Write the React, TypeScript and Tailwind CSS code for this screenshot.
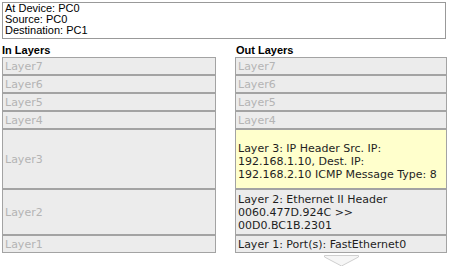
import React from "react";

const dv = { fontFamily: '"DejaVu Sans", Verdana, sans-serif' };
const ar = { fontFamily: '"Liberation Sans", Arial, sans-serif' };

function Row({ h, children, muted, yellow }: { h: string; children: React.ReactNode; muted?: boolean; yellow?: boolean }) {
  return (
    <div
      className={`${h} flex items-center border border-[#a3a3a3] pl-[2px] text-[11px] leading-[13px] ${
        yellow ? "bg-[#ffffcc] pt-[4px]" : "bg-[#ececec]"
      } ${muted ? "text-[#b4b4b4]" : "text-[#1e1e1e]"}`}
      style={dv}
    >
      <div>{children}</div>
    </div>
  );
}

export default function App() {
  return (
    <div className="w-[450px] h-[266px] bg-white overflow-hidden relative">
      <div
        className="ml-[2px] mt-[2px] w-[444px] h-[37px] border border-[#999999] pl-[2px] text-[11px] leading-[11px] text-black"
        style={ar}
      >
        <div>At Device: PC0</div>
        <div>Source: PC0</div>
        <div>Destination: PC1</div>
      </div>
      <div className="flex ml-[2px] mt-[5px] gap-[19px]">
        <div className="w-[214px] flex flex-col">
          <div className="h-[13px] text-[11px] leading-[13px] font-bold text-black" style={ar}>
            In Layers
          </div>
          <Row h="h-[18px]" muted>Layer7</Row>
          <Row h="h-[18px]" muted>Layer6</Row>
          <Row h="h-[18px]" muted>Layer5</Row>
          <Row h="h-[18px]" muted>Layer4</Row>
          <Row h="h-[60px]" muted>Layer3</Row>
          <Row h="h-[46px]" muted>Layer2</Row>
          <Row h="h-[18px]" muted>Layer1</Row>
        </div>
        <div className="w-[212px] flex flex-col">
          <div className="h-[13px] pl-[1px] text-[11px] leading-[13px] font-bold text-black" style={ar}>
            Out Layers
          </div>
          <Row h="h-[18px]" muted>Layer7</Row>
          <Row h="h-[18px]" muted>Layer6</Row>
          <Row h="h-[18px]" muted>Layer5</Row>
          <Row h="h-[18px]" muted>Layer4</Row>
          <Row h="h-[60px]" yellow>
            Layer 3: IP Header Src. IP:
            <br />
            192.168.1.10, Dest. IP:
            <br />
            192.168.2.10 ICMP Message Type: 8
          </Row>
          <Row h="h-[46px]">
            Layer 2: Ethernet II Header
            <br />
            0060.477D.924C &gt;&gt;
            <br />
            00D0.BC1B.2301
          </Row>
          <Row h="h-[18px]">Layer 1: Port(s): FastEthernet0</Row>
          <div className="flex justify-center mt-[2px]">
            <svg width="35" height="12" viewBox="0 0 35 12">
              <polygon points="0.5,0.5 34.5,0.5 34.5,2 17.5,11 0.5,2" fill="#f6f6f6" stroke="#cfcfcf" strokeWidth="1" />
            </svg>
          </div>
        </div>
      </div>
    </div>
  );
}
